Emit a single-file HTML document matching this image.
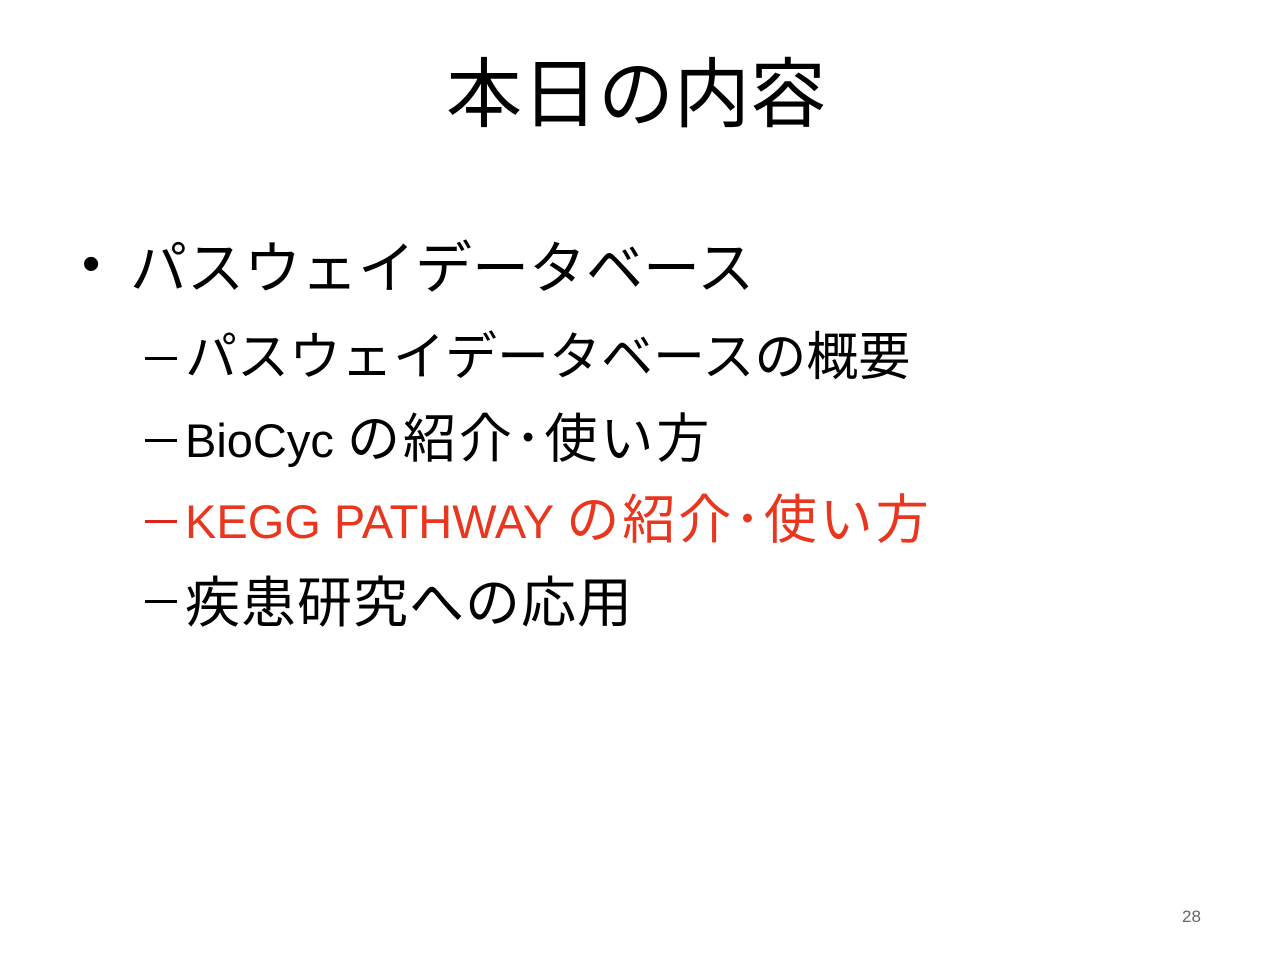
<!DOCTYPE html>
<html><head><meta charset="utf-8"><style>
body{margin:0;width:1280px;height:960px;background:#fff;position:relative;overflow:hidden;font-family:"Liberation Sans","Noto Sans CJK JP",sans-serif;color:#000}
.t{position:absolute;white-space:nowrap;line-height:1}
.j{font-family:"Noto Sans CJK JP",sans-serif}
.l{font-family:"Liberation Sans",sans-serif;font-size:47px}
.d{position:absolute;width:32px;height:3px;background:#000}
</style></head><body>
<div class="t j" style="left:446px;top:50px;font-size:76px;">本日の内容</div>
<div class="t" style="left:82px;top:238px;font-size:52px;">•</div>
<div class="t j" style="left:130px;top:236px;font-size:57px;">パスウェイデータベース</div>

<div class="d" style="left:145px;top:357px"></div>
<div class="t j" style="left:185px;top:327px;font-size:52px;">パスウェイデータベースの概要</div>

<div class="d" style="left:145px;top:439px"></div>
<div class="t" style="left:185px;top:409px;"><span class="l">BioCyc </span><span class="j" style="font-size:53px;letter-spacing:3px">の紹介･使い方</span></div>

<div class="d" style="left:145px;top:520px;background:#e0231a"></div>
<div class="t" style="left:185px;top:490px;color:#e8361f"><span class="l">KEGG PATHWAY </span><span class="j" style="font-size:53px;letter-spacing:3px">の紹介･使い方</span></div>

<div class="d" style="left:145px;top:600px"></div>
<div class="t j" style="left:185px;top:571px;font-size:55px;letter-spacing:1px">疾患研究への応用</div>

<div class="t" style="left:1182px;top:908px;font-size:17px;color:#666">28</div>
</body></html>
